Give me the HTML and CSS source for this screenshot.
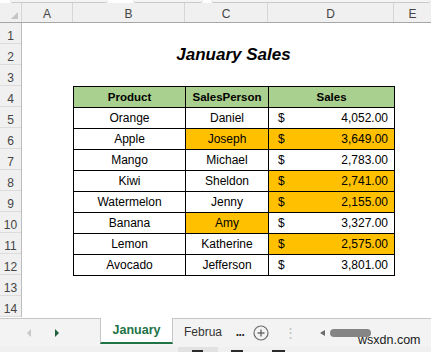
FILE: index.html
```html
<!DOCTYPE html>
<html lang="en">
<head>
  <meta charset="UTF-8" />
  <title>January Sales</title>
  <link rel="stylesheet" href="styles.css">
</head>
<body>
  <div class="finestra">
    <!-- bordo della barra della formula -->
    <div class="bordo-top">
      <span class="pezzo p1"></span>
      <span class="pezzo p2"></span>
      <span class="pezzo p3"></span>
    </div>

    <!-- intestazioni colonne -->
    <div class="intestazioni">
      <div class="angolo"><span class="triangolo"></span></div>
      <div class="col col-a">A</div>
      <div class="col col-b">B</div>
      <div class="col col-c">C</div>
      <div class="col col-d">D</div>
      <div class="col col-e">E</div>
    </div>

    <div class="foglio">
      <div class="numeri">
        <div>1</div><div>2</div><div>3</div><div>4</div><div>5</div>
        <div>6</div><div>7</div><div>8</div><div>9</div><div>10</div>
        <div>11</div><div>12</div><div>13</div><div>14</div>
      </div>

      <div class="celle">
        <div class="riga-vuota"></div>
        <div class="riga-titolo">January Sales</div>
        <div class="riga-vuota"></div>

        <table class="vendite">
          <tr class="testa">
            <th class="w-b">Product</th>
            <th class="w-c">SalesPerson</th>
            <th class="w-d">Sales</th>
          </tr>
          <tr><td>Orange</td><td>Daniel</td><td><div class="importo"><span>$</span><span>4,052.00</span></div></td></tr>
          <tr><td>Apple</td><td class="evid">Joseph</td><td class="evid"><div class="importo"><span>$</span><span>3,649.00</span></div></td></tr>
          <tr><td>Mango</td><td>Michael</td><td><div class="importo"><span>$</span><span>2,783.00</span></div></td></tr>
          <tr><td>Kiwi</td><td>Sheldon</td><td class="evid"><div class="importo"><span>$</span><span>2,741.00</span></div></td></tr>
          <tr><td>Watermelon</td><td>Jenny</td><td class="evid"><div class="importo"><span>$</span><span>2,155.00</span></div></td></tr>
          <tr><td>Banana</td><td class="evid">Amy</td><td><div class="importo"><span>$</span><span>3,327.00</span></div></td></tr>
          <tr><td>Lemon</td><td>Katherine</td><td class="evid"><div class="importo"><span>$</span><span>2,575.00</span></div></td></tr>
          <tr><td>Avocado</td><td>Jefferson</td><td><div class="importo"><span>$</span><span>3,801.00</span></div></td></tr>
        </table>
      </div>
    </div>

    <!-- barra dei fogli -->
    <div class="barra-fogli">
      <div class="frecce">
        <span class="freccia-sx"></span>
        <span class="freccia-dx"></span>
      </div>
      <div class="scheda attiva">January</div>
      <div class="scheda">Februa</div>
      <div class="altri">...</div>
      <div class="aggiungi">
        <svg width="16" height="16" viewBox="0 0 16 16">
          <circle cx="8" cy="8" r="7" fill="none" stroke="#6b6b6b" stroke-width="1.2"/>
          <path d="M8 4.5v7M4.5 8h7" stroke="#6b6b6b" stroke-width="1.4"/>
        </svg>
      </div>
      <div class="separatore">&#8942;</div>
      <div class="scorrimento">
        <span class="freccia-scroll"></span>
        <span class="cursore"></span>
      </div>
    </div>

    <div class="stato">
      <span class="blocco"></span>
      <span class="segno s1"></span>
      <span class="segno s2"></span>
      <span class="segno s3"></span>
    </div>

    <div class="filigrana">wsxdn.com</div>
  </div>
</body>
</html>
```

FILE: styles.css
```css
:root {
  --grigio-testa: #f0f0f0;
  --linea: #d6d6d6;
  --verde: #217346;
  --verde-testa: #a9d08e;
  --arancio: #ffc000;
  --testo: #111;
}

* {
  margin: 0;
  padding: 0;
  box-sizing: border-box;
}

body {
  width: 431px;
  height: 352px;
  overflow: hidden;
  background: #fff;
  font-family: 'Liberation Sans', Arial, sans-serif;
  color: var(--testo);
}

.finestra {
  position: relative;
  width: 431px;
  height: 352px;
  display: flex;
  flex-direction: column;
}

/* bordo superiore */
.bordo-top {
  height: 3px;
  display: flex;
  background: #fff;
}

.pezzo {
  height: 3px;
  background: #f4f4f4;
  border-bottom: 1px solid #c9c9c9;
  border-radius: 0 0 3px 3px;
}

.p1 { margin-left: 10px; width: 98px; }
.p2 { margin-left: 25px; width: 70px; }
.p3 { margin-left: 8px; flex: 1; }

/* intestazioni colonne */
.intestazioni {
  display: flex;
  height: 20px;
  background: var(--grigio-testa);
  border-bottom: 1px solid #a6a6a6;
  font-size: 12px;
  color: #444;
}

.angolo {
  width: 22px;
  position: relative;
  border-right: 1px solid var(--linea);
}

.triangolo {
  position: absolute;
  right: 3px;
  bottom: 3px;
  width: 0;
  height: 0;
  border-left: 7px solid transparent;
  border-bottom: 7px solid #c4c4c4;
}

.col {
  display: flex;
  align-items: center;
  justify-content: center;
  padding-top: 3px;
  border-right: 1px solid var(--linea);
}

.col-a { width: 51px; }
.col-b { width: 112px; }
.col-c { width: 83px; }
.col-d { width: 126px; }
.col-e { flex: 1; border-right: none; }

/* foglio */
.foglio {
  display: flex;
  height: 294px;
}

.numeri {
  width: 22px;
  background: var(--grigio-testa);
  border-right: 1px solid #bdbdbd;
  font-size: 12px;
  color: #444;
}

.numeri div {
  height: 21px;
  display: flex;
  align-items: center;
  justify-content: center;
  padding-top: 5px;
  border-bottom: 1px solid #dcdcdc;
}

.celle {
  flex: 1;
  padding-left: 51px;
}

.riga-vuota {
  height: 21px;
}

.riga-titolo {
  height: 21px;
  width: 321px;
  text-align: center;
  font-size: 17px;
  font-weight: bold;
  font-style: italic;
  line-height: 21px;
  color: #000;
}

/* tabella */
.vendite {
  border-collapse: collapse;
  font-size: 12px;
  color: #000;
}

.vendite tr {
  height: 21px;
}

.vendite th,
.vendite td {
  border: 1px solid #000;
  padding: 0;
  text-align: center;
  font-weight: normal;
}

.testa th {
  background: var(--verde-testa);
  font-weight: bold;
  font-size: 11.5px;
}

.w-b { width: 112px; }
.w-c { width: 83px; }
.w-d { width: 126px; }

.evid {
  background: var(--arancio);
}

.importo {
  display: flex;
  justify-content: space-between;
  padding: 0 6px 0 9px;
}

/* barra dei fogli */
.barra-fogli {
  height: 29px;
  margin-top: 1px;
  background: #f3f3f3;
  border-top: 1px solid #c6c6c6;
  display: flex;
  align-items: flex-start;
  font-size: 12px;
}

.frecce {
  width: 100px;
  height: 27px;
  display: flex;
  align-items: center;
  gap: 24px;
  padding-left: 27px;
}

.freccia-sx {
  width: 0;
  height: 0;
  border-top: 4px solid transparent;
  border-bottom: 4px solid transparent;
  border-right: 4px solid #c8c8c8;
}

.freccia-dx {
  width: 0;
  height: 0;
  border-top: 4px solid transparent;
  border-bottom: 4px solid transparent;
  border-left: 4px solid #1f5f3b;
}

.scheda {
  height: 25px;
  display: flex;
  align-items: center;
  color: #333;
}

.scheda.attiva {
  width: 73px;
  margin-top: -1px;
  height: 26px;
  justify-content: center;
  background: #fff;
  border-left: 1px solid #c6c6c6;
  border-right: 1px solid #c6c6c6;
  border-bottom: 2px solid var(--verde);
  color: var(--verde);
  font-weight: bold;
  font-size: 12.5px;
}

.scheda:not(.attiva) {
  width: 56px;
  padding-left: 11px;
  overflow: hidden;
  white-space: nowrap;
}

.altri {
  width: 22px;
  height: 25px;
  display: flex;
  align-items: center;
  justify-content: center;
  font-weight: bold;
  color: #222;
  letter-spacing: -0.5px;
}

.aggiungi {
  width: 20px;
  height: 27px;
  display: flex;
  align-items: center;
  justify-content: center;
}

.separatore {
  width: 38px;
  height: 27px;
  display: flex;
  align-items: center;
  justify-content: center;
  color: #c0c0c0;
  font-size: 13px;
}

.scorrimento {
  flex: 1;
  height: 27px;
  display: flex;
  align-items: center;
  gap: 5px;
  padding-left: 11px;
}

.freccia-scroll {
  width: 0;
  height: 0;
  border-top: 3.5px solid transparent;
  border-bottom: 3.5px solid transparent;
  border-right: 5px solid #6a6a6a;
}

.cursore {
  width: 41px;
  height: 8px;
  border-radius: 4px;
  background: #858585;
}

/* barra di stato */
.stato {
  flex: 1;
  background: #f0f0f0;
  position: relative;
}

.blocco {
  position: absolute;
  left: 178px;
  top: 0;
  width: 40px;
  height: 6px;
  background: #e2e2e2;
}

.segno {
  position: absolute;
  top: 3px;
  height: 3px;
  background: #2b2b2b;
}

.s1 { left: 192px; width: 11px; }
.s2 { left: 231px; width: 12px; }
.s3 { left: 272px; width: 13px; }

.filigrana {
  position: absolute;
  left: 358px;
  top: 333px;
  font-size: 12.5px;
  color: #1a1a1a;
  font-family: 'Liberation Sans', Arial, sans-serif;
}
```
